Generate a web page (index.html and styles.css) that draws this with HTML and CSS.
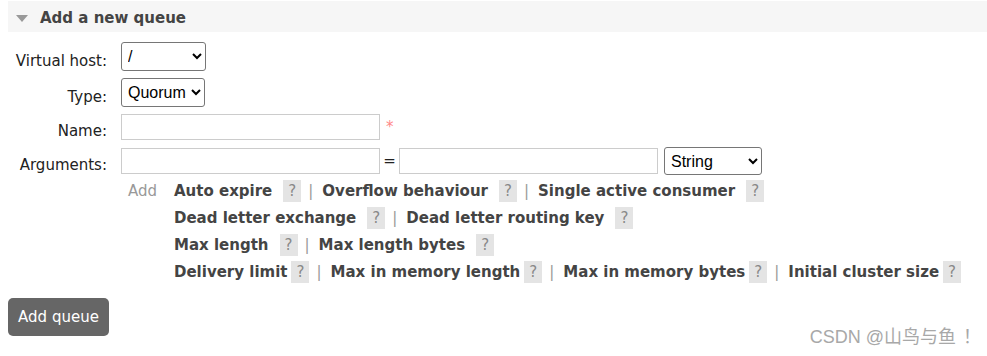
FILE: index.html
```html
<!DOCTYPE html>
<html>
	<head>
		<meta charset="utf-8">
		<link rel="stylesheet" href="styles.css">
		<title>Add a new queue</title>
	</head>
	<body>
		<div class="section">
			<div class="sectionHeader">
				<span class="arrow"></span>
				Add a new queue
			</div>
			<div class="form">
				<label class="label">Virtual host:</label>
				<div class="field">
					<select class="sel vhost"><option>/</option></select>
				</div>

				<label class="label">Type:</label>
				<div class="field">
					<select class="sel"><option>Quorum</option><option>Classic</option><option>Stream</option></select>
				</div>

				<label class="label">Name:</label>
				<div class="field">
					<input type="text" class="txt">
					<span class="req">*</span>
				</div>

				<label class="label">Arguments:</label>
				<div class="field">
					<input type="text" class="txt">
					<span class="eq">=</span>
					<input type="text" class="txt">
					<select class="sel argType"><option>String</option><option>Number</option><option>Boolean</option><option>List</option></select>
				</div>

				<div></div>
				<div class="argHelp">
					<span class="add">Add</span>
					<div class="argLinks">
						<div class="linkRow">
							<a class="argLink">Auto expire</a><span class="help">?</span><span class="sep">|</span>
							<a class="argLink">Overflow behaviour</a><span class="help">?</span><span class="sep">|</span>
							<a class="argLink">Single active consumer</a><span class="help">?</span>
						</div>
						<div class="linkRow">
							<a class="argLink">Dead letter exchange</a><span class="help">?</span><span class="sep">|</span>
							<a class="argLink">Dead letter routing key</a><span class="help">?</span>
						</div>
						<div class="linkRow">
							<a class="argLink">Max length</a><span class="help">?</span><span class="sep">|</span>
							<a class="argLink">Max length bytes</a><span class="help">?</span>
						</div>
						<div class="linkRow tight">
							<a class="argLink">Delivery limit</a><span class="help">?</span><span class="sep">|</span>
							<a class="argLink">Max in memory length</a><span class="help">?</span><span class="sep">|</span>
							<a class="argLink">Max in memory bytes</a><span class="help">?</span><span class="sep">|</span>
							<a class="argLink">Initial cluster size</a><span class="help">?</span>
						</div>
					</div>
				</div>
			</div>
			<div class="footer">
				<button class="button">Add queue</button>
				<span class="mark">CSDN @山鸟与鱼<span class="bang">！</span></span>
			</div>
		</div>
	</body>
</html>
```

FILE: styles.css
```css
body {
	margin: 0;
	padding: 1px 0 0 8px;
	font-family: "DejaVu Sans", Verdana, sans-serif;
	font-size: 15px;
	color: #222;
	background: #fff;
}
.sectionHeader {
	background-color: #f6f6f6;
	height: 31px;
	box-sizing: border-box;
	padding-top: 2px;
	font-weight: bold;
	font-size: 15px;
	color: #444;
	padding-left: 8px;
	display: flex;
	align-items: center;
}
.arrow {
	display: inline-block;
	width: 0;
	height: 0;
	border-left: 6px solid transparent;
	border-right: 6px solid transparent;
	border-top: 7px solid #999;
	margin-right: 12px;
	margin-top: 1px;
}
.form {
	display: grid;
	grid-template-columns: 99px auto;
	column-gap: 14px;
	row-gap: 7px;
	margin-top: 10px;
	align-items: center;
}
.label {
	text-align: right;
	color: #222;
	padding-top: 8px;
}
.field {
	display: flex;
	align-items: center;
}
.sel {
	font-family: "Liberation Sans", Arial, sans-serif;
	font-size: 16px;
	height: 29px;
	border: 1px solid #767676;
	border-radius: 3px;
	background: #fff;
	color: #000;
	padding: 0 2px;
}
.vhost {
	width: 85px;
}
.txt {
	width: 259px;
	height: 26px;
	box-sizing: border-box;
	border: 1px solid #ccc;
	padding: 2px 4px;
	font-family: inherit;
	font-size: 15px;
	margin: 0;
}
.req {
	color: #f88;
	margin-left: 6px;
	margin-top: 0;
	font-size: 15px;
}
.eq {
	width: 19px;
	text-align: center;
	color: #222;
}
.argType {
	width: 98px;
	height: 28px;
	margin-left: 6px;
}
.argHelp {
	display: flex;
	align-items: flex-start;
	margin-top: -2px;
}
.add {
	color: #999;
	width: 46px;
	padding-left: 7px;
	line-height: 22px;
}
.linkRow {
	display: flex;
	align-items: center;
	height: 22px;
	margin-bottom: 5px;
}
.linkRow.tight {
	margin-bottom: 0;
}
.argLink {
	font-weight: bold;
	color: #444;
	margin-right: 11px;
}
.tight .argLink {
	margin-right: 4px;
}
.help {
	display: inline-block;
	background-color: #e4e4e4;
	color: #888;
	width: 18px;
	height: 22px;
	line-height: 22px;
	text-align: center;
	font-size: 15px;
}
.sep {
	color: #999;
	margin: 0 9px 0 7px;
}
.footer {
	display: flex;
	align-items: flex-start;
	justify-content: space-between;
	margin-top: 15px;
}
.button {
	background-color: #666;
	color: #fff;
	border: none;
	border-radius: 5px;
	font-family: "DejaVu Sans", Verdana, sans-serif;
	font-size: 15px;
	width: 101px;
	height: 38px;
	padding: 0;
	cursor: pointer;
}
.mark {
	font-family: "Liberation Sans", "Noto Sans CJK SC", sans-serif;
	font-size: 18px;
	line-height: 21px;
	color: #a8a8a8;
	margin-top: 29px;
	margin-right: 6px;
}
.bang {
	padding-left: 7px;
}
```
